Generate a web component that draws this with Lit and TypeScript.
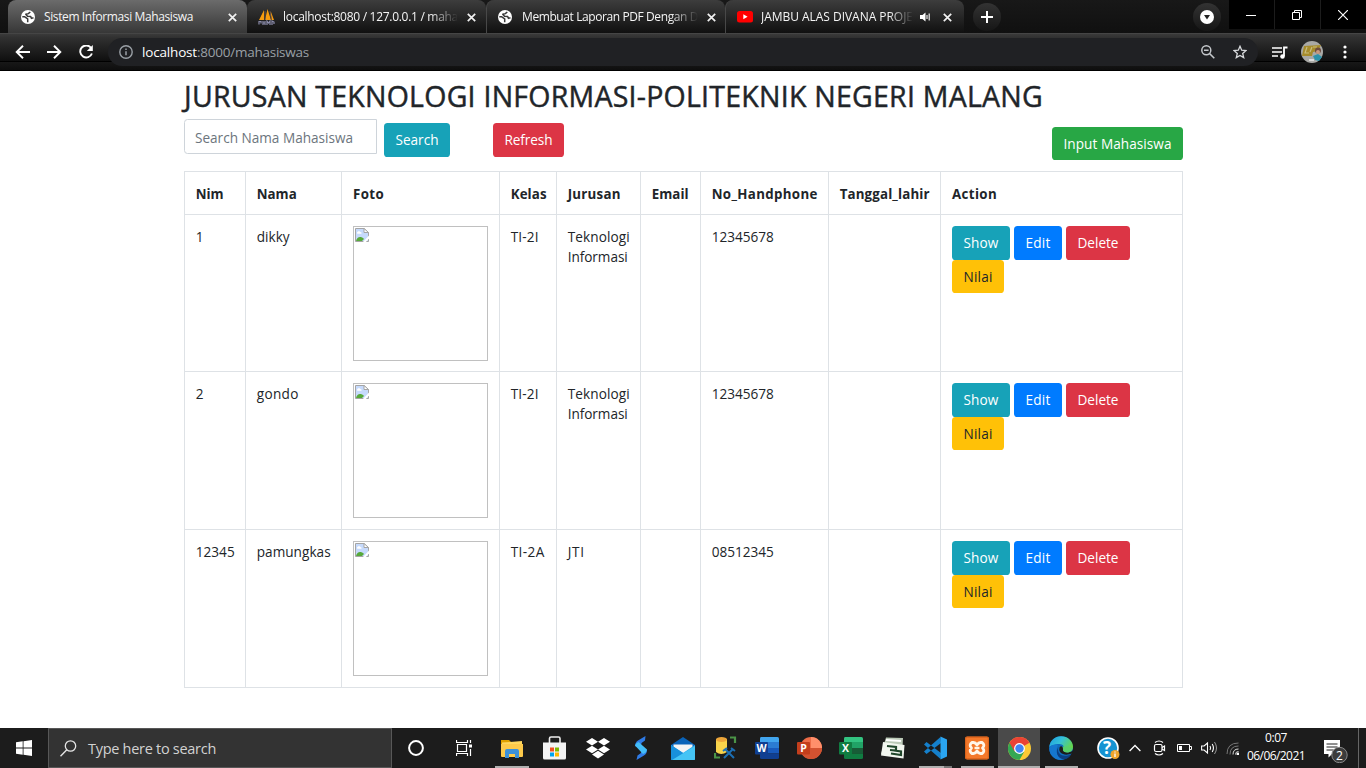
import { LitElement, html, css, svg } from "lit";
import { customElement, property } from "lit/decorators.js";

/** Single line of text tracked so that it fills a given width. */
@customElement("fit-text")
class FitText extends LitElement {
  @property({ type: Number }) w = 0;
  @property() text = "";
  static styles = css`
    :host { display: inline-block; white-space: nowrap; flex: none; }
    span { display: inline-block; white-space: pre; }
  `;
  render() { return html`<span>${this.text}</span>`; }
  updated() {
    const s = this.renderRoot.querySelector("span") as HTMLElement;
    s.style.letterSpacing = "0px";
    const natural = s.getBoundingClientRect().width;
    s.style.letterSpacing = `${(this.w - natural) / this.text.length}px`;
  }
}

const t = (text: string, w: number) => html`<fit-text .text=${text} .w=${w}></fit-text>`;
const icon = (w: number, h: number, body: unknown) =>
  html`<svg width=${w} height=${h} viewBox="0 0 ${w} ${h}" fill="none">${body}</svg>`;

const globe = icon(14, 14, svg`<circle cx="7" cy="7" r="7" fill="#fff"/>
  <path d="M1.300 6.800h2.500l2.900 2v3.500M9.300 2L7.300 3.600 4.800 4.300l1.700 2 3.200.3.800 1.800 2-.6" stroke="#3a3a3a" stroke-width="1.500" stroke-linejoin="round"/>`);
const close = icon(9, 9, svg`<path d="M.8.8l7.400 7.400M8.200.8L.8 8.200" stroke="#f1f1f1" stroke-width="1.700"/>`);
const pma = icon(17, 16, svg`<path d="M6 1L1 11h5zM9.500 0L7 11h6zM13 3l-.5 0 1 8h2.500z" fill="#f89c0e"/><path d="M7 2v9M12 2l1.500 9" stroke="#6a5440"/>
  <path d="M1 15.500v-3h2v2M5 12v4M7 12v4M5 14h2M9 16v-4l1.500 2 1.500-2v4M14 16v-4l2 1v2" stroke="#8b8cab" stroke-width="1.200"/>`);
const youtube = icon(16, 12, svg`<rect width="16" height="11.500" rx="2.500" fill="#f00"/><path d="M6.300 3.300v5l4.300-2.500z" fill="#fff"/>`);
const speaker = icon(11, 10, svg`<path d="M0 3h2.500L5.500.5v9L2.500 7H0z" fill="#fff"/><path d="M7 3v4M9.200 1.500v7" stroke="#eee" stroke-width="1.200"/>`);

const fileBroken = icon(16, 16, svg`<path d="M1.500 1.500h8.500l4.500 4v9h-13z" fill="#c6dafc" stroke="#a5a5a5"/>
  <path d="M10 1.500v4h4.500z" fill="#fff" stroke="#a5a5a5"/><path d="M3 6c0-2 3-2.500 3.500-.8 1-.3 1.500.8.8 1.500H3.300z" fill="#fff"/>
  <path d="M2 14c1-4.500 5-5 8-2l-2 2z" fill="#57a93a"/><path d="M8.500 15.500L15 8.500v3l-3.500 4z" fill="#fff"/>`);

const office = (letter: string, dark: string, mid: string, light: string, lighter: string) => icon(24, 24, svg`
  <path d="M6 1h16.500q1.500 0 1.500 1.500V6H5V2.500Q5 1 6 1" fill="${lighter}"/><path d="M5 6h19v6H5z" fill="${light}"/><path d="M5 12h19v5.500H5z" fill="${mid}"/>
  <path d="M5 17.500h19v4q0 1.500-1.500 1.500H6.500Q5 23 5 21.500z" fill="${dark}"/><rect y="6" width="13" height="12.500" rx="1" fill="${dark}"/>
  <text x="6.500" y="16" class="badge">${letter}</text>`);

const apps: { w: number; cls: string; art: unknown }[] = [
  { w: 43, cls: "run", art: icon(22, 19, svg`<path d="M0 1h8l2 2v4H0z" fill="#e0a100"/><path d="M1 3.500L9 3l12-1v15.500H1z" fill="#ffd75e"/><path d="M0 5h22v12q0 1-1 1H1q-1 0-1-1z" fill="#fdca4b"/><path d="M4 19v-7q0-2 2-2h10q2 0 2 2v7h-4v-4H8v4z" fill="#3c91d9"/>`) },
  { w: 43, cls: "", art: icon(23, 24, svg`<path d="M6.500 7V2.500q0-1.500 1.500-1.500h7.500Q17 1 17 2.500V7" stroke="#eee" stroke-width="1.600"/><path d="M0 6.500h23V22q0 1.500-1.500 1.500h-20Q0 23.500 0 22z" fill="#f3f3f3"/><path d="M7 11.500h4v4H7z" fill="#f25022"/><path d="M12 11.500h4v4h-4z" fill="#7fba00"/><path d="M7 16.500h4v4H7z" fill="#00a4ef"/><path d="M12 16.500h4v4h-4z" fill="#ffb900"/>`) },
  { w: 43, cls: "", art: icon(24, 21, svg`<path d="M6 0l6 3.800-6 3.800L0 3.800zM18 0l6 3.800-6 3.800-6-3.800zM6 7.700l6 3.800-6 3.800-6-3.800zM18 7.700l6 3.800-6 3.800-6-3.800zM12 12.800l6 3.800-6 3.800-6-3.800z" fill="#fff"/>`) },
  { w: 43, cls: "", art: icon(14, 24, svg`<path d="M11.500 0L4 4.500Q1 6.500 1 10l5.500 3 1-6 3.500-2.500z" fill="#2f7be6"/><path d="M2.500 24l7.500-4.500q3-2 3-5.500L8 11l-1 6-3.500 2.500z" fill="#2f7be6"/><path d="M1 9.500Q1.500 7 4.500 6L13 13.500Q12.500 17 9 18z" fill="#43bdf7"/>`) },
  { w: 42, cls: "", art: icon(24, 23, svg`<path d="M0 8L12 0l12 8v6H0z" fill="#0a63b8"/><path d="M2.500 7.500h19v9h-19z" fill="#f4f4f4"/><path d="M0 8l12 8 12-8v14q0 1-1 1H1q-1 0-1-1z" fill="#28a8ea"/><path d="M0 8l13 8.500L4 23H1q-1 0-1-1z" fill="#1890dc"/><path d="M1 23L24 9v13q0 1-1 1z" fill="#45c4f5"/>`) },
  { w: 42, cls: "", art: icon(23, 24, svg`<path d="M2 3v13q5 4 11 0V3z" fill="#f8d34b"/><ellipse cx="7.500" cy="3.500" rx="5.500" ry="2.500" fill="#eda63a"/><path d="M16 1.500h5V7M6 21.500H1V17" stroke="#4b9447" stroke-width="2.200"/><path d="M11 13l9 9M19 13l-9 9M9 15l4-3M17 12l4 3" stroke="#1c6fb5" stroke-width="2"/>`) },
  { w: 42, cls: "", art: office("W", "#103f91", "#185abd", "#2b7cd3", "#41a5ee") },
  { w: 42, cls: "", art: icon(25, 24, svg`<circle cx="14" cy="12" r="11" fill="#ed6c47"/><path d="M14 1a11 11 0 0 1 11 11H14z" fill="#ff8f6b"/><path d="M3 12h22a11 11 0 0 1-22 0" fill="#d35230"/><rect y="6" width="13" height="12.500" rx="1" fill="#c43e1c"/><text x="6.500" y="16" class="badge">P</text>`) },
  { w: 42, cls: "", art: office("X", "#107c41", "#185c37", "#21a366", "#33c481") },
  { w: 42, cls: "", art: icon(24, 24, svg`<path d="M5 1.500l17 .5-1 18L0 18z" fill="#bccab8"/><path d="M2 6l21.500 3-1 13.500L0 19.500z" fill="#f2f6ef"/><path d="M5 4l15 1" stroke="#fff" stroke-width="2"/><path d="M6 10l9 1v3.500l-6-.5M10 17.500l10 1.500v-3.500l-7-1" stroke="#20462b" stroke-width="2.200"/>`) },
  { w: 42, cls: "run stack", art: icon(24, 24, svg`<path d="M17.500 1L1 15.500l2.500 2.500L18 7zM17.500 23L1 8.500 3.500 6 18 17z" fill="#1580cc"/><path d="M17.500.5L24 3.500v17l-6.500 3z" fill="#2aa5f1"/>`) },
  { w: 42, cls: "run", art: icon(24, 24, svg`<rect y=".5" width="24" height="23" rx="2" fill="#f4792b"/><rect x=".7" y="1.200" width="22.600" height="21.600" rx="1.500" stroke="#d85f18"/><path d="M7 6.500h1.500q2 0 3.500 2.500 1.500-2.500 3.500-2.500H17q3.500 2.500.5 5.500 3 3 -.5 5.500h-1.500q-2 0-3.500-2.500-1.500 2.500-3.500 2.500H7q-3.500-2.500-.5-5.500-3-3 .5-5.500z" stroke="#fff6ea" stroke-width="2.800" stroke-linejoin="round"/><path d="M9.500 12h5" stroke="#fff6ea" stroke-width="2.400"/>`) },
  { w: 42, cls: "run active", art: icon(23, 23, svg`<circle cx="11.500" cy="11.500" r="11.500" fill="#fcc934"/><path d="M11.500 11.500L1.500 5.800A11.500 11.500 0 0 1 21.500 5.800z" fill="#ea4335"/><path d="M1.540 5.750A11.500 11.500 0 0 0 11.500 23l4.500-8-4.500-3.500z" fill="#34a853"/><path d="M1.540 5.750h19.900H11.500L6.500 14.500z" fill="#ea4335"/><circle cx="11.500" cy="11.500" r="5.400" fill="#fff"/><circle cx="11.500" cy="11.500" r="4.200" fill="#4285f4"/>`) },
  { w: 42, cls: "run", art: icon(24, 24, svg`<defs><linearGradient id="e" x1="0" y1="0" x2="1" y2=".5"><stop stop-color="#1c9de0"/><stop offset=".5" stop-color="#35c1d8"/><stop offset="1" stop-color="#64d64d"/></linearGradient></defs>
    <circle cx="12" cy="12" r="11.800" fill="#0f6cbd"/><path d="M.3 11C1 4.500 6 .2 12 .2c7 0 12 5 12 10.300 0 4-3 6-6 6-3.500 0-5-1.500-3.500-3 1.500-2.500-.5-5.500-4-5.500-5 0-9 2-10.200 3" fill="url(#e)"/><path d="M9 9c-3 5-1 13 6.500 14.300C6 26 0 19 .3 12 2 8.500 6 8 9 9" fill="#1577cf"/><path d="M9.500 11c-2 5 2 11.500 12.500 7.500-1.500 3-4.500 4.800-7 5-7-1-9-8.500-5.500-12.500" fill="#0b3f83"/><path d="M10.500 11.500q-1.500 5.500 5 7 3.500.5 7.500-1 .8-.8 1-2.500l-5 1.500q-4 0-5-2 .8-2-.5-3.500-1.500-1.500-3 .5" fill="#1c1c1c"/><path d="M14 14q1 2.500 5 2.500 3.500-.5 4.800-4l-5-2h-5z" fill="#58d06a"/>`) },
];

interface Student { nim: [string, number]; nama: [string, number]; kelas: [string, number]; jurusan: [string, number][]; hp: string }
const students: Student[] = [
  { nim: ["1", 7], nama: ["dikky", 33], kelas: ["TI-2I", 28], jurusan: [["Teknologi", 62], ["Informasi", 60]], hp: "12345678" },
  { nim: ["2", 8], nama: ["gondo", 42], kelas: ["TI-2I", 28], jurusan: [["Teknologi", 62], ["Informasi", 60]], hp: "12345678" },
  { nim: ["12345", 39], nama: ["pamungkas", 74], kelas: ["TI-2A", 34], jurusan: [["JTI", 17]], hp: "08512345" },
];
const heads: [string, number][] = [["Nim", 28], ["Nama", 40], ["Foto", 31], ["Kelas", 36], ["Jurusan", 53], ["Email", 37], ["No_Handphone", 106], ["Tanggal_lahir", 90], ["Action", 45]];

@customElement("app-root")
class AppRoot extends LitElement {
  static styles = css`
    :host { display: flex; flex-direction: column; width: 1366px; height: 768px; overflow: hidden; background: #fff; color: #212529; font-family: "Open Sans", "Noto Sans", sans-serif; }
    * { box-sizing: border-box; }
    svg { display: block; flex: none; }
    .strip { height: 33px; display: flex; background: linear-gradient(#181818, #101010); color: #f5f5f5; font-size: 12px; padding-left: 8px; flex: none; }
    .tab { height: 33px; width: 239px; display: flex; align-items: center; padding: 1px 12px 0 11px; background: linear-gradient(#3d3d3d, #101010); border-radius: 8px 8px 0 0; }
    .tab + .tab + .tab { border-left: 1px solid #484848; }
    .tab.on { background: linear-gradient(#6b6b6b, #373737); padding-left: 13px; padding-right: 10px; }
    .label { margin-left: 9px; flex: 1; height: 18px; line-height: 18px; }
    .pma .label { margin-left: 8px; }
    .tab .up { margin-left: 10px; }
    .yt .label { margin-left: 8px; }
    .yt { padding-left: 11px; }
    .fade { -webkit-mask-image: linear-gradient(90deg, #000 84%, transparent); mask-image: linear-gradient(90deg, #000 84%, transparent); margin-right: 9px; }
    .yt .fade { margin-right: 6px; }
    .tab .snd { margin: 0 12px 0 1px; }
    .disc { width: 28px; height: 28px; margin: 3px 0 0 9px; border-radius: 50%; background: linear-gradient(#333, #161616); display: grid; place-items: center; flex: none; }
    .grow { flex: 1; }
    .win { display: flex; height: 29px; background: #000; margin-left: 8px; }
    .win div { width: 46px; display: grid; place-items: center; border-left: 1px solid #1c1c1c; padding-right: 1px; }
    .win div:first-child { width: 45px; border: 0; }
    .bar { height: 38px; flex: none; display: flex; align-items: flex-start; background: linear-gradient(#3a3a3a 0, #303030 4px, #0f0f0f 27px, #000 27px, #000 28px, #181818 28px, #0e0e0e 36px, #000 36px); border-top: 1px solid #454545; }
    .nav { display: flex; padding: 11px 0 0 15px; gap: 17px; width: 108px; }
    .omni { width: 1150px; height: 28px; margin-top: 4px; border-radius: 14px; background: #202124; display: flex; align-items: center; padding: 0 11px; color: #9aa0a6; font-size: 13.500px; }
    .omni b { font-weight: 400; color: #fff; }
    .url { margin-left: 9px; display: flex; flex: 1; }
    .star { margin-left: 18px; }
    .tools { display: flex; align-items: center; margin-left: 13px; height: 36px; }
    .tools svg:nth-child(2) { margin-left: 13px; } .tools svg:nth-child(3) { margin-left: 20px; }
    main { flex: 1; width: 999px; margin-left: 184px; font-size: 13.600px; }
    h2 { margin: 8px 0 0; height: 36px; line-height: 34px; font-size: 28.500px; font-weight: 500; -webkit-text-stroke: .45px #212529; }
    .form { display: flex; height: 56px; padding-top: 4px; }
    .field { width: 193px; height: 35px; border: 1px solid #ced4da; border-radius: 3.500px 0 0 3.500px; color: #6c757d; padding: 0 10px; line-height: 35px; }
    .btn { height: 33.600px; border-radius: 3.600px; padding: 0 11.500px; color: #fff; line-height: 34px; display: inline-block; }
    .info { background: #17a2b8; } .red { background: #dc3545; } .green { background: #28a745; } .blue { background: #007bff; } .gold { background: #ffc107; color: #212529; }
    .s1 { margin: 4px 0 0 7px; height: 34px; } .s2 { margin: 4px 0 0 43px; height: 34px; } .s3 { margin: 8px 0 0 auto; height: 33px; }
    .grid { display: grid; grid-template-columns: 61px 96px 158px 57px 84px 60px 128px 112px 243px; grid-template-rows: 43px 157px 158px 159px; }
    .cell { border: solid #dee2e6; border-width: 1px 0 0 1px; padding: 11px 0 0 10.700px; line-height: 20px; }
    .cell:nth-child(9n) { border-right-width: 1px; padding-left: 11px; }
    .cell:nth-child(9n + 3) { padding-left: 11px; }
    .cell:nth-child(n + 28) { border-bottom-width: 1px; }
    .head { font-weight: 700; font-size: 13.300px; line-height: 22px; }
    .cell fit-text { display: block; }
    .cell > fit-text { margin-top: 1px; }
    .cell > fit-text + fit-text { margin-top: 0; }
    .head > fit-text { margin-top: 0; }
    .img { width: 135px; height: 135px; border: 1px solid #c0c0c0; }
    .acts { display: flex; flex-wrap: wrap; gap: 0 4px; width: 210px; }
    .acts fit-text { display: inline-block; }
    .task { height: 40px; flex: none; background: #1c1c1c; display: flex; color: #fff; }
    .start { width: 48px; display: grid; place-items: center; }
    .find { width: 344px; background: #333; border: 1px solid #575757; display: flex; align-items: center; padding-left: 11px; font-size: 14.500px; color: #d2d2d2; gap: 11px; }
    .slot { display: grid; place-items: center; width: 48px; }
    .slot + .slot { width: 49px; margin-right: 1px; }
    .app { display: grid; place-items: center; height: 40px; position: relative; }
    .run::after { content: ""; position: absolute; left: 5px; right: 4px; bottom: 0; height: 2px; background: #b0b0b0; }
    .stack::after { background: linear-gradient(90deg, #b0b0b0 75%, #777 75%); }
    .active { background: #4a4a4a; } .active::after { left: 0; right: 0; }
    .w43 { width: 43px; } .w42 { width: 42px; }
    .badge { fill: #fff; font: 700 10.500px "Open Sans", sans-serif; text-anchor: middle; }
    .tray { display: flex; align-items: center; margin-left: 15px; gap: 9px; }
    .clock { width: 60px; margin-left: 7px; font-size: 12px; line-height: 18px; text-align: center; height: 38px; padding-top: 1px; }
    .note { margin: 5px 0 0 17px; }
    .n2 { fill: #fff; font: 12px "Open Sans", sans-serif; text-anchor: middle; }
    .q { fill: #fff; font: 700 17px "Open Sans", sans-serif; text-anchor: middle; }
    .edge { width: 1px; background: #666; margin-left: 8px; }
  `;

  row(s: Student) {
    return html`
      <div class="cell">${t(...s.nim)}</div>
      <div class="cell">${t(...s.nama)}</div>
      <div class="cell"><div class="img">${fileBroken}</div></div>
      <div class="cell">${t(...s.kelas)}</div>
      <div class="cell">${s.jurusan.map((j) => t(...j))}</div>
      <div class="cell"></div>
      <div class="cell">${t(s.hp, 62)}</div>
      <div class="cell"></div>
      <div class="cell"><div class="acts">
        <span class="btn info">${t("Show", 35)}</span><span class="btn blue">${t("Edit", 25)}</span><span class="btn red">${t("Delete", 41)}</span><span class="btn gold">${t("Nilai", 29)}</span>
      </div></div>`;
  }

  render() {
    return html`
      <div class="strip">
        <div class="tab on">${globe}<div class="label">${t("Sistem Informasi Mahasiswa", 149)}</div>${close}</div>
        <div class="tab pma">${pma}<div class="label fade">${t("localhost:8080 / 127.0.0.1 / maha", 175)}</div>${close}</div>
        <div class="tab">${globe}<div class="label fade up">${t("Membuat Laporan PDF Dengan D", 176)}</div>${close}</div>
        <div class="tab yt">${youtube}<div class="label fade">${t("JAMBU ALAS DIVANA PROJE", 152)}</div><span class="snd">${speaker}</span>${close}</div>
        <div class="disc">${icon(12, 12, svg`<path d="M6 0v12M0 6h12" stroke="#fff" stroke-width="2"/>`)}</div>
        <div class="grow"></div>
        <div class="disc">${icon(14, 14, svg`<circle cx="7" cy="7" r="7" fill="#fff"/><path d="M4 5h6l-3 4.500z" fill="#222"/>`)}</div>
        <div class="win">
          <div>${icon(10, 10, svg`<path d="M0 5.500h10" stroke="#fff"/>`)}</div>
          <div>${icon(10, 10, svg`<path d="M.5 2.500h7v7h-7zM2.500 2V.5h7v7H8" stroke="#fff"/>`)}</div>
          <div>${icon(10, 10, svg`<path d="M0 0l10 10M10 0L0 10" stroke="#fff" stroke-width="1.200"/>`)}</div>
        </div>
      </div>
      <div class="bar">
        <div class="nav">
          ${icon(15, 14, svg`<path d="M15 7H2M8 .8L1.700 7 8 13.200" stroke="#fff" stroke-width="1.900"/>`)}
          ${icon(15, 14, svg`<path d="M0 7h13M7 .8L13.300 7 7 13.200" stroke="#fff" stroke-width="1.900"/>`)}
          ${icon(15, 14, svg`<path d="M12 2.800A6 6 0 1 0 12.900 8.500" stroke="#fff" stroke-width="1.900"/><path d="M13.800 0v6H7.800z" fill="#fff"/>`)}
        </div>
        <div class="omni">
          ${icon(14, 14, svg`<circle cx="7" cy="7" r="6.200" stroke="#9aa0a6" stroke-width="1.400"/><path d="M7 6.200v4M7 3.500v1.500" stroke="#9aa0a6" stroke-width="1.500"/>`)}
          <div class="url"><b>${t("localhost", 55)}</b>${t(":8000/mahasiswas", 112)}</div>
          ${icon(14, 14, svg`<circle cx="5.300" cy="5.300" r="4.500" stroke="#c4c7cb" stroke-width="1.500"/><path d="M3 5.300h4.600M8.500 8.500l4.800 4.800" stroke="#c4c7cb" stroke-width="1.600"/>`)}
          <span class="star">${icon(14, 14, svg`<path d="M7 1.300l1.700 3.900 4.200.4-3.200 2.800 1 4.200L7 10.400l-3.700 2.200 1-4.200L1.100 5.600l4.200-.4z" stroke="#d8dadd" stroke-width="1.300"/>`)}</span>
        </div>
        <div class="tools">
          ${icon(17, 13, svg`<path d="M1 2h10M1 6h10M1 10h6" stroke="#fff" stroke-width="1.700"/><path d="M13 10V1.500h3.500" stroke="#fff" stroke-width="1.800"/><circle cx="11.500" cy="10.500" r="2.300" fill="#fff"/>`)}
          ${icon(22, 22, svg`<circle cx="11" cy="11" r="11" fill="#a9a9a6"/><path d="M3 5l17-1-3 6-5 1-1 4H1z" fill="#a68b2b"/><path d="M6 6l-2 6h4M11 6l-2 5M12 6h4" stroke="#c9bd7d" stroke-width="1.200"/><circle cx="17" cy="9.500" r="3" fill="#6d4b3e"/><circle cx="17" cy="11" r="2" fill="#c99a80"/><path d="M12 15l5-2 4 3-3 4-4-1z" fill="#2c93ab"/><path d="M8 18h5v2H8z" fill="#ddd"/>`)}
          ${icon(4, 14, svg`<circle cx="2" cy="2" r="1.600" fill="#fff"/><circle cx="2" cy="7" r="1.600" fill="#fff"/><circle cx="2" cy="12" r="1.600" fill="#fff"/>`)}
        </div>
      </div>
      <main>
        <h2>${t("JURUSAN TEKNOLOGI INFORMASI-POLITEKNIK NEGERI MALANG", 859)}</h2>
        <div class="form">
          <div class="field">${t("Search Nama Mahasiswa", 158)}</div>
          <span class="btn info s1">${t("Search", 43)}</span>
          <span class="btn red s2">${t("Refresh", 48)}</span>
          <span class="btn green s3">${t("Input Mahasiswa", 108)}</span>
        </div>
        <div class="grid">
          ${heads.map(([h, w]) => html`<div class="cell head">${t(h, w)}</div>`)}
          ${students.map((s) => this.row(s))}
        </div>
      </main>
      <div class="task">
        <div class="start">${icon(16, 16, svg`<path d="M0 2.200l6.700-.9v6.300H0zM7.500 1.200L16 0v7.600H7.500zM0 8.400h6.700v6.300L0 13.800zM7.500 8.400H16V16l-8.500-1.200z" fill="#fff"/>`)}</div>
        <div class="find">${icon(17, 17, svg`<circle cx="10.500" cy="6" r="5.200" stroke="#e5e5e5" stroke-width="1.300"/><path d="M6.800 9.800L.5 16.300" stroke="#e5e5e5" stroke-width="1.400"/>`)}<span>${t("Type here to search", 128)}</span></div>
        <div class="slot">${icon(16, 16, svg`<circle cx="8" cy="8" r="6.900" stroke="#fff" stroke-width="2"/>`)}</div>
        <div class="slot">${icon(17, 16, svg`<path d="M.5 0v2.500h11V0M.5 16v-2.500h11V16M1.500 4.500h9v7h-9zM14.500 0v3M14.500 9v7" stroke="#fff" stroke-width="1.200"/><path d="M13 4.500h3v3h-3z" fill="#fff"/>`)}</div>
        ${apps.map((a) => html`<div class="app ${a.cls} w${a.w}">${a.art}</div>`)}
        <div class="tray">
          ${icon(23, 23, svg`<circle cx="11" cy="11" r="10" fill="#1593d2" stroke="#fff" stroke-width="1.600"/><text x="10" y="17" class="q">?</text><circle cx="18" cy="17.500" r="4.500" fill="#f2a52b"/><path d="M18 16.500v3.500M18 14.500v1" stroke="#fff" stroke-width="1.300"/>`)}
          ${icon(12, 8, svg`<path d="M.6 7L6 1.500 11.400 7" stroke="#fff" stroke-width="1.300"/>`)}
          ${icon(18, 16, svg`<rect x="4.500" y="4.500" width="7.500" height="7" rx="1.500" stroke="#fff" stroke-width="1.200"/><path d="M12 7.500l2.500-1.500v4.500L12 9M5 2.500q4-3 8 0M5 13.500q4 3 8 0" stroke="#fff" stroke-width="1.200"/>`)}
          ${icon(15, 10, svg`<path d="M.5 1.500h12v7H.5zM13 3.500h1.500v3H13" stroke="#fff"/><path d="M2 3h3v4H2z" fill="#fff"/>`)}
          ${icon(16, 14, svg`<path d="M.6 5v4h2.500L6.500 12V2L3.100 5z" stroke="#fff" stroke-width="1.100"/><path d="M9 5q1.200 2 0 4M11.200 3q2.500 4 0 8" stroke="#fff" stroke-width="1.100"/><path d="M13.500 1q4 6 0 12" stroke="#999"/>`)}
          ${icon(13, 13, svg`<path d="M1 12Q1 1 12.500 1M4 12.500Q4 4 12.500 4" stroke="#777"/><path d="M7 12.500Q7 7 12.500 7M9.500 12.500q0-3 3-3" stroke="#ddd"/><circle cx="12" cy="12" r="1.500" fill="#fff"/>`)}
        </div>
        <div class="clock"><div>${t("0:07", 22)}</div><div>${t("06/06/2021", 58)}</div></div>
        <div class="note">${icon(27, 30, svg`<path d="M1 7h16v14H9l-3.500 3.500V21H1z" fill="#fff"/><path d="M3.500 11h11M3.500 14h11M3.500 17h7" stroke="#222"/><circle cx="16.500" cy="22" r="7.700" fill="#3c3c3c" stroke="#888"/><text x="16.500" y="26.500" class="n2">2</text>`)}</div>
        <div class="edge"></div>
      </div>`;
  }
}
